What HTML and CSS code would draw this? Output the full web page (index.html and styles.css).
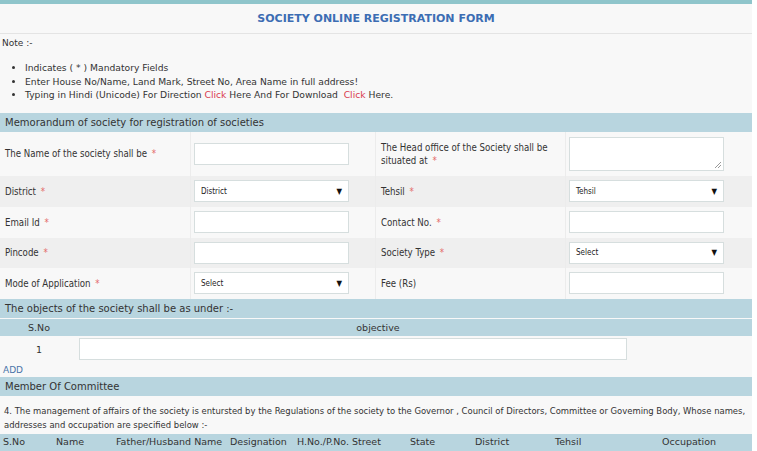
FILE: index.html
```html
<!DOCTYPE html>
<html>
<head>
<meta charset="utf-8">
<link rel="stylesheet" href="styles.css">
</head>
<body>
<div class="topbar"></div>
<div class="page">
  <h1 class="title">SOCIETY ONLINE REGISTRATION FORM</h1>
  <div class="note">Note :-</div>
  <ul class="bullets">
    <li>Indicates ( * ) Mandatory Fields</li>
    <li>Enter House No/Name, Land Mark, Street No, Area Name in full address!</li>
    <li>Typing in Hindi (Unicode) For Direction <span class="red">Click</span> Here And For Download &nbsp;<span class="red">Click</span> Here.</li>
  </ul>

  <div class="sect first">Memorandum of society for registration of societies</div>
  <div class="grid">
    <div class="row r1">
      <div class="lab"><span>The Name of the society shall be <span class="ast">*</span></span></div>
      <div class="fld"><div class="inp"></div></div>
      <div class="lab"><span>The Head office of the Society shall be situated at <span class="ast">*</span></span></div>
      <div class="fld"><div class="inp ta"><span class="grip"></span></div></div>
    </div>
    <div class="row alt">
      <div class="lab"><span>District <span class="ast">*</span></span></div>
      <div class="fld"><div class="inp sel"><span>District</span><span class="arr">▼</span></div></div>
      <div class="lab"><span>Tehsil <span class="ast">*</span></span></div>
      <div class="fld"><div class="inp sel"><span>Tehsil</span><span class="arr">▼</span></div></div>
    </div>
    <div class="row">
      <div class="lab"><span>Email Id <span class="ast">*</span></span></div>
      <div class="fld"><div class="inp"></div></div>
      <div class="lab"><span>Contact No. <span class="ast">*</span></span></div>
      <div class="fld"><div class="inp"></div></div>
    </div>
    <div class="row alt r4">
      <div class="lab"><span>Pincode <span class="ast">*</span></span></div>
      <div class="fld"><div class="inp"></div></div>
      <div class="lab"><span>Society Type <span class="ast">*</span></span></div>
      <div class="fld"><div class="inp sel"><span>Select</span><span class="arr">▼</span></div></div>
    </div>
    <div class="row">
      <div class="lab"><span>Mode of Application <span class="ast">*</span></span></div>
      <div class="fld"><div class="inp sel"><span>Select</span><span class="arr">▼</span></div></div>
      <div class="lab"><span>Fee (Rs)</span></div>
      <div class="fld"><div class="inp"></div></div>
    </div>
  </div>

  <div class="sect">The objects of the society shall be as under :-</div>
  <div class="objhead"><span class="c-sno">S.No</span><span class="c-obj">objective</span></div>
  <div class="objrow"><span class="c-sno">1</span><div class="inp objinp"></div></div>
  <div class="add">ADD</div>

  <div class="sect mem">Member Of Committee</div>
  <p class="para">4. The management of affairs of the society is entursted by the Regulations of the society to the Governor , Council of Directors, Committee or Goveming Body, Whose names, addresses and occupation are specified below :-</p>
  <div class="memhead">
    <span class="m1">S.No</span><span class="m2">Name</span><span class="m3">Father/Husband Name</span><span class="m4">Designation</span><span class="m5">H.No./P.No. Street</span><span class="m6">State</span><span class="m7">District</span><span class="m8">Tehsil</span><span class="m9">Occupation</span>
  </div>
</div>
</body>
</html>
```

FILE: styles.css
```css
* { box-sizing: border-box; }
html, body { margin: 0; padding: 0; background: #ffffff; }
body { font-family: "DejaVu Sans", Verdana, sans-serif; color: #333; overflow: hidden; }
.topbar { height: 4px; background: #8fc5cb; width: 752px; }
.page { width: 752px; background: #f8f8f8; padding-bottom: 20px; }
.title {
  margin: 0; height: 30px; padding-top: 8px;
  text-align: center; font-size: 11px; font-weight: bold; color: #3c6db3;
  border-bottom: 1px solid #e4e4e4;
}
.note { font-size: 9px; padding: 4px 0 0 2px; height: 27px; }
.bullets { margin: 0; padding: 0 0 0 25px; font-size: 9.2px; line-height: 13.5px; }
.bullets li { list-style: disc; }
.red { color: #d93a4e; }
.sect {
  background: #b8d5df; height: 19px; line-height: 19px; font-size: 10px; padding-left: 5px; color: #333;
}
.sect.first { margin-top: 11px; }
.grid { display: flex; flex-direction: column; }
.row { display: grid; grid-template-columns: 190px 185px 190px 187px; height: 31px; align-items: center; }
.row > div { height: 100%; display: flex; align-items: center; border-left: 1px solid #ececec; }
.row > div:first-child { border-left: none; }
.row.r1 { height: 44px; }
.row.r4 { height: 30px; }
.row.alt { background: #efefef; }
.lab { font-family: "DejaVu Sans", sans-serif; font-stretch: condensed; font-size: 9.6px; padding-left: 5px; padding-right: 8px; line-height: 13px; }
.lab:nth-child(3) { padding-left: 5px; }
.ast { color: #e46a6a; margin-left: 2px; }
.fld { padding-left: 3px; }
.inp { background: #fff; border: 1px solid #d6dede; height: 22px; width: 155px; }
.inp.ta { height: 34px; position: relative; }
.grip { position: absolute; right: 2px; bottom: 2px; width: 6px; height: 6px;
  background: linear-gradient(135deg, transparent 45%, #999 46%, #999 54%, transparent 55%, transparent 70%, #999 71%, #999 79%, transparent 80%); }
.sel { display: flex; justify-content: space-between; align-items: center; padding: 0 6px 0 6px; font-size: 8px; font-stretch: condensed; color: #222; }
.sel .arr { font-size: 8px; color: #111; }
.objhead { background: #b8d5df; height: 17px; margin-top: 1px; display: flex; align-items: center; font-size: 9.5px; }
.c-sno { width: 78px; text-align: center; flex: none; }
.c-obj { flex: none; width: 600px; text-align: center; }
.objrow { display: flex; align-items: center; height: 27px; font-size: 9.5px; }
.objinp { width: 548px; height: 22px; margin-left: 1px; }
.add { font-size: 9px; color: #4a74a8; padding-left: 3px; height: 14px; line-height: 14px; }
.sect.mem { margin-top: 0; }
.para { margin: 0; padding: 8px 4px 0 4px; height: 38px; font-size: 9.4px; font-stretch: condensed; line-height: 14px; }
.memhead { background: #b8d5df; height: 18px; font-size: 9.5px; position: relative; }
.memhead span { position: absolute; top: 2px; }
.m1 { left: 3px; } .m2 { left: 56px; } .m3 { left: 116px; } .m4 { left: 230px; } .m5 { left: 297px; }
.m6 { left: 410px; } .m7 { left: 475px; } .m8 { left: 555px; } .m9 { left: 662px; }
```
